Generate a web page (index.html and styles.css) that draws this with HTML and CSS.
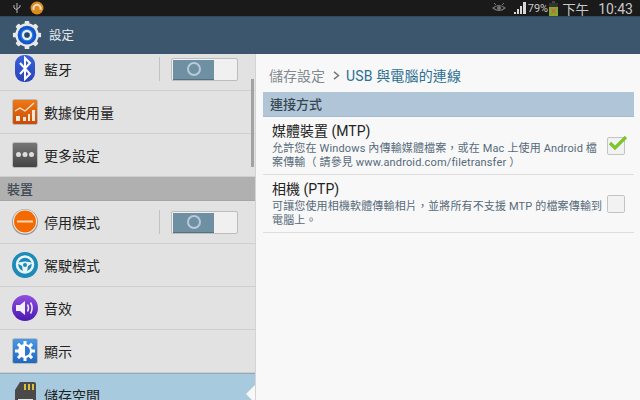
FILE: index.html
```html
<!DOCTYPE html>
<html lang="zh-Hant">
<head>
<meta charset="utf-8">
<title>設定</title>
<link rel="stylesheet" href="styles.css">
</head>
<body>
<div class="screen">
  <header class="status">
    <svg class="st-usb" width="10" height="12" viewBox="0 0 10 12"><path d="M5 1v10M2 3v3l3 2M8 3v2L5 7" fill="none" stroke="#b4b4b4" stroke-width="1"/></svg>
    <svg class="st-app" width="14" height="14" viewBox="0 0 14 14"><circle cx="7" cy="7" r="6.500" fill="#dc8a1e"/><path d="M3.800 9A3.600 3.600 0 1 1 10.400 8.600" fill="none" stroke="#f0dcc0" stroke-width="2"/></svg>
    <span class="spacer"></span>
    <svg class="st-eye" width="14" height="12" viewBox="0 0 14 12"><path d="M1 6q6-5 12 0q-6 5-12 0z" fill="none" stroke="#777" stroke-width="1.200"/><circle cx="7" cy="6" r="2" fill="#777"/><path d="M2 1l2 2M12 1l-2 2" stroke="#777"/></svg>
    <svg class="st-sig" width="13" height="13" viewBox="0 0 13 13"><path d="M0 13h2v-2H0zM3 13h2V8H3zM6 13h2V5H6zM9 13h3V1H9z" fill="#d8d8d8"/></svg>
    <span class="st-pct">79%</span>
    <svg class="st-bat" width="9" height="15" viewBox="0 0 9 15"><rect x="3" y="0" width="3" height="2" fill="#444"/><rect x="0" y="2" width="9" height="4" fill="#333"/><rect x="0" y="6" width="9" height="9" fill="#86a832"/><path d="M2.500 7.500l4 5M6.500 7.500l-4 5" stroke="#d9583a" stroke-width="1.200"/></svg>
    <span class="st-ampm">下午</span>
    <span class="st-time">10:43</span>
  </header>

  <div class="actionbar">
    <svg class="ab-gear" width="30" height="30" viewBox="0 0 32 32">
      <g fill="#e8e8e8"><circle cx="16" cy="16" r="12.500"/>
        <rect x="13.500" y="1" width="5" height="30" rx="1"/>
        <rect x="13.500" y="1" width="5" height="30" rx="1" transform="rotate(45 16 16)"/>
        <rect x="13.500" y="1" width="5" height="30" rx="1" transform="rotate(90 16 16)"/>
        <rect x="13.500" y="1" width="5" height="30" rx="1" transform="rotate(135 16 16)"/></g>
      <circle cx="16" cy="16" r="10" fill="#1455c8"/><circle cx="16" cy="16" r="7" fill="#1f73e6"/><circle cx="16" cy="16" r="5.500" fill="#e8eef4"/><circle cx="16" cy="16" r="3" fill="#21496e"/>
    </svg>
    <span class="ab-title">設定</span>
  </div>

  <main class="panes">
    <nav class="left">
      <div class="list">
        <div class="row">
          <span class="ic"><svg width="26" height="28" viewBox="0 0 26 28"><defs><linearGradient id="bt" x2="0" y2="1"><stop offset="0" stop-color="#3a62dc"/><stop offset="1" stop-color="#2a42b8"/></linearGradient></defs><rect x="3" y="0" width="20" height="27" rx="9" fill="url(#bt)"/><path d="M8 8l10 11-5 5V3l5 5L8 19" fill="none" stroke="#fff" stroke-width="2"/></svg></span>
          <span class="label">藍牙</span>
          <span class="sw"><span class="sw-on"><i class="ring"></i></span></span>
        </div>
        <div class="row">
          <span class="ic"><svg width="26" height="26" viewBox="0 0 26 26"><defs><linearGradient id="o" x2="0" y2="1"><stop offset="0" stop-color="#ee7a14"/><stop offset="1" stop-color="#c84a06"/></linearGradient></defs><rect x=".5" y=".5" width="25" height="25" rx="2" fill="url(#o)" stroke="#bbb"/><path d="M3 12l5-3 5 3 9-8" fill="none" stroke="#f6e6d8" stroke-width="1.200"/><path d="M4 22h4v-5H4zM11 22h3v-4h-3zM16 22h2V15h-2zM20 22h3V11h-3z" fill="#f6e6d8"/></svg></span>
          <span class="label">數據使用量</span>
        </div>
        <div class="row">
          <span class="ic"><svg width="26" height="26" viewBox="0 0 26 26"><defs><linearGradient id="g" x2="0" y2="1"><stop offset="0" stop-color="#777"/><stop offset="1" stop-color="#444"/></linearGradient></defs><rect x=".5" y=".5" width="25" height="25" rx="2" fill="url(#g)" stroke="#bbb"/><circle cx="6.500" cy="12.500" r="2.500" fill="#ddd"/><circle cx="13" cy="12.500" r="2.500" fill="#ddd"/><circle cx="19.500" cy="12.500" r="2.500" fill="#ddd"/></svg></span>
          <span class="label">更多設定</span>
        </div>
        <div class="section">裝置</div>
        <div class="row">
          <span class="ic"><svg width="26" height="26" viewBox="0 0 26 26"><circle cx="13" cy="13" r="13" fill="#999"/><circle cx="13" cy="12.500" r="12" fill="#f5f0ea"/><circle cx="13" cy="12.500" r="11" fill="#f56a00"/><rect x="5" y="11.500" width="16" height="2" fill="#f5d8b8"/></svg></span>
          <span class="label">停用模式</span>
          <span class="sw"><span class="sw-on"><i class="ring"></i></span></span>
        </div>
        <div class="row">
          <span class="ic"><svg width="26" height="26" viewBox="0 0 26 26"><circle cx="13" cy="13" r="13" fill="#1c8bb8"/><circle cx="13" cy="12.500" r="8" fill="none" stroke="#eaf4f8" stroke-width="2.500"/><path d="M5 11q8-3 16 0l-5 3-1 6h-4l-1-6z" fill="#eaf4f8"/><circle cx="13" cy="13" r="2" fill="#1c8bb8"/></svg></span>
          <span class="label">駕駛模式</span>
        </div>
        <div class="row">
          <span class="ic"><svg width="26" height="26" viewBox="0 0 26 26"><defs><linearGradient id="p" x2="0" y2="1"><stop offset="0" stop-color="#9050e0"/><stop offset="1" stop-color="#4a18b0"/></linearGradient></defs><circle cx="13" cy="13" r="13" fill="url(#p)"/><path d="M4 10h4l5-4v14l-5-4H4z" fill="#f4f0fa"/><path d="M15.500 9.500q2 3.500 0 7M18.500 7.500q3.200 5.500 0 11" fill="none" stroke="#f4f0fa" stroke-width="1.500"/></svg></span>
          <span class="label">音效</span>
        </div>
        <div class="row">
          <span class="ic"><svg width="26" height="26" viewBox="0 0 26 26"><defs><linearGradient id="b" x2="0" y2="1"><stop offset="0" stop-color="#4a9ae6"/><stop offset="1" stop-color="#1f66c0"/></linearGradient></defs><rect x=".5" y=".5" width="25" height="25" rx="2" fill="url(#b)" stroke="#bbb"/><g fill="#fff"><circle cx="13" cy="13" r="7"/><rect x="11.500" y="3" width="3" height="20"/><rect x="11.500" y="3" width="3" height="20" transform="rotate(45 13 13)"/><rect x="11.500" y="3" width="3" height="20" transform="rotate(90 13 13)"/><rect x="11.500" y="3" width="3" height="20" transform="rotate(135 13 13)"/></g><path d="M13 8a5 5 0 0 1 0 10z" fill="#2f78d0"/></svg></span>
          <span class="label">顯示</span>
        </div>
        <div class="row selected">
          <span class="ic"><svg width="26" height="28" viewBox="0 0 26 28"><path d="M8 1h14a2 2 0 0 1 2 2v23H3V9z" fill="#4a4a4a"/><path d="M12 3h2v6h-2zM16 3h2v6h-2zM20 3h2v6h-2z" fill="#d8c040"/><rect x="6" y="18" width="15" height="8" fill="#e8e8e8"/></svg></span>
          <span class="label">儲存空間</span>
          <i class="pointer"></i>
        </div>
      </div>
      <i class="thumb"></i>
    </nav>

    <section class="right">
      <div class="crumb"><span class="crumb-parent">儲存設定</span><svg class="crumb-sep" width="7" height="9" viewBox="0 0 7 9"><path d="M1 .8l4.500 3.700L1 8.200" fill="none" stroke="#777" stroke-width="1.500"/></svg><span class="crumb-cur">USB 與電腦的連線</span></div>
      <div class="group">連接方式</div>
      <div class="opt">
        <div class="opt-text">
          <div class="opt-title">媒體裝置 (MTP)</div>
          <div class="opt-sub">允許您在 Windows 內傳輸媒體檔案，或在 Mac 上使用 Android 檔案傳輸（ 請參見 www.android.com/filetransfer ）</div>
        </div>
        <span class="check"><svg class="tick" width="20" height="16" viewBox="0 0 20 16"><path d="M2 8l5 5L18 2" fill="none" stroke="#7cc62c" stroke-width="3.200"/></svg></span>
      </div>
      <div class="opt">
        <div class="opt-text">
          <div class="opt-title">相機 (PTP)</div>
          <div class="opt-sub">可讓您使用相機軟體傳輸相片，並將所有不支援 MTP 的檔案傳輸到電腦上。</div>
        </div>
        <span class="check"></span>
      </div>
    </section>
  </main>
</div>
</body>
</html>
```

FILE: styles.css
```css
* { box-sizing: border-box; }
html, body { margin: 0; padding: 0; }
body { font-family: Roboto, "Noto Sans CJK TC", sans-serif; }
.screen { width: 640px; height: 400px; overflow: hidden; display: flex; flex-direction: column; background: #f8f8f8; }

.status { height: 16px; flex: none; background: #1a1a1a; display: flex; align-items: center; color: #c8c8c8; }
.st-usb { margin-left: 12px; }
.st-app { margin-left: 8px; }
.spacer { flex: 1; }
.st-sig { margin-left: 8px; margin-bottom: 1px; }
.st-pct { font-size: 11px; margin-left: 1px; }
.st-bat { margin-left: 1px; }
.st-ampm { font-size: 13.500px; margin-left: 4px; padding-top: 1px; }
.st-time { font-size: 14px; margin-left: 9px; margin-right: 7px; padding-top: 1px; }

.actionbar { height: 38px; flex: none; background: #3b566d; border-top: 1px solid #34495a; display: flex; align-items: center; padding-left: 12px; color: #e6ecf0; }
.ab-gear { margin-bottom: 2px; }
.ab-title { font-size: 12.500px; margin-left: 7px; padding-bottom: 2px; }

.panes { flex: 1; min-height: 0; display: flex; }

.left { width: 256px; flex: none; background: #e2e2e2; position: relative; overflow: hidden; border-right: 1px solid #d4d4d4; }
.list { margin-top: -6px; }
.row { height: 43px; display: flex; align-items: center; border-bottom: 1px solid #cfcfcf; padding-left: 12px; color: #222; position: relative; }
.ic { width: 26px; height: 28px; flex: none; display: flex; align-items: center; justify-content: center; }
.ic svg { display: block; }
.label { font-size: 14px; margin-left: 6px; flex: 1; }
.sw { width: 79px; height: 24px; flex: none; margin-right: 17px; border-left: 1px solid #c2c2c2; padding-left: 11px; display: flex; align-items: center; }
.sw-on { display: block; position: relative; width: 67px; height: 23px; background: #f0f0f0; border: 1px solid #bdbdbd; border-radius: 2px; padding: 1px; }
.sw-on::before { content: ""; display: block; width: 41px; height: 19px; background: #6f8fa3; border-bottom: 1px solid #557080; }
.ring { position: absolute; left: 15px; top: 3px; width: 14px; height: 14px; border: 2px solid #b7cad6; border-radius: 50%; }
.section { height: 24px; background: #b0b0b0; color: #3e4a54; font-size: 13px; font-weight: 500; line-height: 25px; padding-left: 7px; border-bottom: 1px solid #a6a6a6; }
.selected { background: #a8cade; border-top: 1px solid #8fa9b9; border-bottom: 0; }
.pointer { position: absolute; right: 0; top: 11px; width: 0; height: 0; border: 9px solid transparent; border-right-color: #f8f8f8; border-left-width: 0; }
.thumb { position: absolute; left: 251px; top: 25px; width: 3px; height: 88px; background: #a2a2a2; }

.right { flex: 1; padding: 0 6px 0 7px; min-width: 0; }
.crumb { height: 38px; display: flex; align-items: center; padding: 4px 0 0 6px; font-size: 14px; }
.crumb-parent { color: #808a90; }
.crumb-sep { margin: 0 6px 0 8px; }
.crumb-cur { color: #2a7092; letter-spacing: .15px; }
.group { height: 25px; background: #b0c5d8; color: #37464f; font-size: 13px; font-weight: 500; line-height: 26px; padding-left: 7px; border-bottom: 1px solid #a5bacb; }
.opt { height: 58px; display: flex; align-items: flex-start; border-bottom: 1px solid #dedede; padding-left: 9px; }
.opt-text { width: 333px; flex: none; padding-top: 5px; }
.opt-title { font-size: 14px; line-height: 19px; color: #222; }
.opt-sub { font-size: 11px; line-height: 14px; letter-spacing: .15px; color: #566a7a; margin-top: 1px; }
.check { position: relative; width: 18px; height: 18px; margin: 20px 0 0 2px; flex: none; background: #f2f2f2; border: 1px solid #c4c4c4; border-radius: 2px; }
.tick { position: absolute; left: 0; top: -3px; }
```
